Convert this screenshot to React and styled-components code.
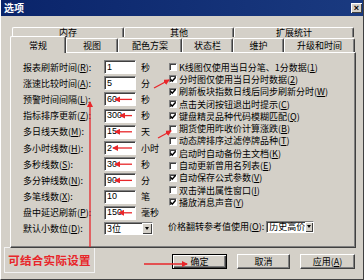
import React from 'react';
import styled, { createGlobalStyle } from 'styled-components';

const face = '#d4d0c8';
const shadow = '#808080';
const darkShadow = '#404040';
const annotRed = '#e8262a';
const uiFont = '"Noto Sans CJK SC", "Liberation Sans", sans-serif';

const GlobalStyle = createGlobalStyle`
  html, body {
    margin: 0;
    padding: 0;
    background: ${face};
  }
  body {
    font-family: ${uiFont};
  }
`;

const Window = styled.div`
  position: relative;
  width: 364px;
  height: 280px;
  box-sizing: border-box;
  background: ${face};
  border-left: 1px solid #ffffff;
  border-right: 1px solid ${darkShadow};
  border-bottom: 1px solid ${darkShadow};
  display: flex;
  flex-direction: column;
  overflow: hidden;
  font-size: 9px;
  color: #000;
`;

const TitleBar = styled.div`
  height: 16px;
  margin-left: -1px;
  margin-right: -1px;
  background: linear-gradient(to right, #0a246a, #1a3a80);
  display: flex;
  align-items: center;
  justify-content: space-between;
  padding: 0 2px 0 4px;
`;

const Title = styled.span`
  color: #fff;
  font-weight: bold;
  font-size: 10px;
  line-height: 16px;
`;

const CloseBtn = styled.div`
  width: 11px;
  height: 10px;
  background: ${face};
  box-shadow: inset 1px 1px #fff, inset -1px -1px ${darkShadow};
  display: flex;
  align-items: center;
  justify-content: center;
  font-family: 'Liberation Sans', sans-serif;
  font-weight: bold;
  font-size: 9px;
  line-height: 10px;
`;

const TabRow = styled.div`
  display: flex;
  align-items: flex-end;
  height: ${(p) => p.$h}px;
  margin-left: ${(p) => p.$left}px;
  margin-top: ${(p) => p.$top || 0}px;
  position: relative;
  z-index: ${(p) => (p.$front ? 2 : 1)};
`;

const Tab = styled.div`
  box-sizing: border-box;
  width: ${(p) => p.$w}px;
  height: ${(p) => (p.$active ? p.$h + 3 : p.$h)}px;
  margin-bottom: ${(p) => (p.$active ? -1 : 0)}px;
  background: ${face};
  border-top: 1px solid #fff;
  border-left: 1px solid #fff;
  border-right: 1px solid ${darkShadow};
  box-shadow: inset -1px 0 ${shadow};
  border-radius: 2px 2px 0 0;
  display: flex;
  align-items: center;
  justify-content: center;
  line-height: 1;
  font-size: 9px;
  position: relative;
  z-index: ${(p) => (p.$active ? 3 : 1)};
`;

const Panel = styled.div`
  box-sizing: border-box;
  margin-left: 9px;
  width: 346px;
  height: 196px;
  border-top: 1px solid #fff;
  border-left: 1px solid #fff;
  border-right: 1px solid ${darkShadow};
  border-bottom: 1px solid ${darkShadow};
  box-shadow: inset -1px -1px ${shadow};
  display: grid;
  grid-template-columns: 146px 1fr;
  padding: 6px 0 0 12px;
  position: relative;
  z-index: 1;
`;

const FieldList = styled.div`
  display: flex;
  flex-direction: column;
`;

const FieldRow = styled.div`
  display: grid;
  grid-template-columns: 81px 32px 1fr;
  align-items: center;
  height: 16.2px;
`;

const Label = styled.span`
  white-space: nowrap;
  line-height: 1;
  u {
    text-decoration: underline;
  }
`;

const Input = styled.div`
  box-sizing: border-box;
  height: 14px;
  background: #fff;
  border-top: 1px solid ${shadow};
  border-left: 1px solid ${shadow};
  border-right: 1px solid #fff;
  border-bottom: 1px solid #fff;
  box-shadow: inset 1px 1px ${darkShadow};
  padding-left: 2px;
  display: flex;
  align-items: center;
  font-family: 'Liberation Sans', sans-serif;
  font-size: 9px;
  line-height: 1;
`;

const Unit = styled.span`
  padding-left: 5px;
  font-size: 9px;
  line-height: 1;
  white-space: nowrap;
`;

const Combo = styled(Input)`
  width: ${(p) => p.$w}px;
  height: ${(p) => p.$h || 13}px;
  padding-right: 0;
  justify-content: space-between;
  font-family: ${uiFont};
`;

const DropBtn = styled.span`
  box-sizing: border-box;
  width: 10px;
  height: 100%;
  background: ${face};
  box-shadow: inset 1px 1px #fff, inset -1px -1px ${darkShadow};
  display: flex;
  align-items: center;
  justify-content: center;
  &::after {
    content: '';
    border-left: 2.5px solid transparent;
    border-right: 2.5px solid transparent;
    border-top: 3px solid #000;
  }
`;

const CheckList = styled.div`
  display: flex;
  flex-direction: column;
  padding-top: 2px;
`;

const CheckRow = styled.div`
  display: flex;
  align-items: center;
  height: 12.3px;
  white-space: nowrap;
  line-height: 1;
`;

const Box = styled.span`
  box-sizing: border-box;
  width: 8px;
  height: 8px;
  flex: none;
  margin-right: 2px;
  background: #fff;
  border-top: 1px solid ${shadow};
  border-left: 1px solid ${shadow};
  border-right: 1px solid #fff;
  border-bottom: 1px solid #fff;
  box-shadow: inset 1px 1px ${darkShadow};
  display: flex;
  align-items: center;
  justify-content: center;
`;

const PriceRow = styled.div`
  display: flex;
  align-items: center;
  margin-top: 12px;
  margin-left: -1px;
  gap: 2px;
  white-space: nowrap;
  line-height: 1;
`;

const Footer = styled.div`
  display: flex;
  align-items: flex-start;
  height: 31px;
  padding-left: 3px;
  padding-right: 8px;
`;

const Note = styled.div`
  box-sizing: border-box;
  width: 91px;
  height: 26px;
  margin-top: -1px;
  border: 1px solid #f2f2f2;
  display: flex;
  align-items: center;
  justify-content: center;
  color: ${annotRed};
  font-weight: bold;
  font-size: 11.5px;
  letter-spacing: 0.3px;
`;

const Buttons = styled.div`
  margin-left: auto;
  display: flex;
  gap: 10px;
  padding-top: 6px;
`;

const Button = styled.div`
  box-sizing: border-box;
  width: ${(p) => p.$w}px;
  height: 15px;
  background: ${face};
  border-top: 1px solid ${(p) => (p.$default ? '#000' : '#fff')};
  border-left: 1px solid ${(p) => (p.$default ? '#000' : '#fff')};
  border-right: 1px solid ${(p) => (p.$default ? '#000' : darkShadow)};
  border-bottom: 1px solid ${(p) => (p.$default ? '#000' : darkShadow)};
  box-shadow: ${(p) =>
    p.$default
      ? `inset 1px 1px #fff, inset -1px -1px ${darkShadow}, inset -2px -2px ${shadow}`
      : `inset -1px -1px ${shadow}`};
  display: flex;
  align-items: center;
  justify-content: center;
  font-size: 9px;
  line-height: 1;
  u {
    text-decoration: underline;
  }
`;

const Overlay = styled.svg`
  position: absolute;
  left: 0;
  top: 0;
  width: 364px;
  height: 280px;
  pointer-events: none;
  z-index: 10;
`;

const backTabs = [
  { label: '内存', w: 112 },
  { label: '其他', w: 110 },
  { label: '扩展统计', w: 120 },
];

const frontTabs = [
  { label: '常规', w: 56, active: true },
  { label: '视图', w: 52 },
  { label: '配色方案', w: 64 },
  { label: '状态栏', w: 51 },
  { label: '维护', w: 51 },
  { label: '升级和时间', w: 71 },
];

const fields = [
  { label: '报表刷新时间', key: 'R', value: '1', unit: '秒' },
  { label: '涨速比较时间', key: 'A', value: '5', unit: '分' },
  { label: '预警时间间隔', key: 'L', value: '60', unit: '秒' },
  { label: '指标排序更新', key: 'Z', value: '300', unit: '秒' },
  { label: '多日线天数', key: 'M', value: '15', unit: '天' },
  { label: '多小时线数', key: 'H', value: '2', unit: '小时' },
  { label: '多秒线数', key: 'S', value: '30', unit: '秒' },
  { label: '多分钟线数', key: 'N', value: '90', unit: '分' },
  { label: '多笔线数', key: 'X', value: '10', unit: '笔' },
  { label: '盘中延迟刷新', key: 'P', value: '150', unit: '毫秒' },
];

const checks = [
  { label: 'K线图仅使用当日分笔、1分数据', key: '1', on: false },
  { label: '分时图仅使用当日分时数据', key: '2', on: true },
  { label: '刷新板块指数日线后同步刷新分时', key: 'W', on: true },
  { label: '点击关闭按钮退出时提示', key: 'C', on: true },
  { label: '键盘精灵品种代码模糊匹配', key: 'Q', on: true },
  { label: '期货使用昨收价计算涨跌', key: 'B', on: false },
  { label: '动态牌排序过滤停牌品种', key: 'T', on: false },
  { label: '启动时自动备份主文档', key: 'K', on: true },
  { label: '自动更新曾用名列表', key: 'E', on: false },
  { label: '自动保存公式参数', key: 'V', on: true },
  { label: '双击弹出属性窗口', key: 'I', on: false },
  { label: '播放消息声音', key: 'Y', on: true },
];

const Check = () => (
  <svg width="7" height="7" viewBox="0 0 7 7">
    <path d="M0.6 3.2 L2.6 5.4 L6.6 0.8" fill="none" stroke="#000" strokeWidth="1.7" />
  </svg>
);

// left-column rows that carry a red pointer, with where the arrow tip sits
const pointers = [
  { row: 2, tip: 114 },
  { row: 3, tip: 119 },
  { row: 4, tip: 114 },
  { row: 5, tip: 112 },
  { row: 6, tip: 114 },
  { row: 7, tip: 114 },
  { row: 9, tip: 118 },
];

const Annotations = () => (
  <Overlay viewBox="0 0 364 280">
    <defs>
      <marker id="head" markerWidth="6" markerHeight="6" refX="5" refY="3" orient="auto" markerUnits="userSpaceOnUse">
        <path d="M0,0 L6,3 L0,6 z" fill={annotRed} />
      </marker>
    </defs>
    <g stroke={annotRed} strokeWidth="1.3" fill="none">
      {pointers.map((p) => {
        const y = 67 + p.row * 16.2;
        return <line key={p.row} x1="131" y1={y} x2={p.tip} y2={y} markerEnd="url(#head)" />;
      })}
      <line x1="153" y1="88" x2="168" y2="80" markerEnd="url(#head)" />
      <line x1="157" y1="138" x2="170" y2="131" markerEnd="url(#head)" />
      <line x1="89" y1="247" x2="89" y2="102" markerEnd="url(#head)" />
      <line x1="143" y1="264" x2="186" y2="264" markerEnd="url(#head)" />
    </g>
  </Overlay>
);

const App = () => (
  <>
    <GlobalStyle />
    <Window>
      <TitleBar>
        <Title>选项</Title>
        <CloseBtn>×</CloseBtn>
      </TitleBar>

      <TabRow $h={10} $left={11} $top={11}>
        {backTabs.map((t) => (
          <Tab key={t.label} $w={t.w} $h={10}>
            {t.label}
          </Tab>
        ))}
      </TabRow>
      <TabRow $h={15} $left={9} $front>
        {frontTabs.map((t) => (
          <Tab key={t.label} $w={t.w} $h={14} $active={t.active}>
            {t.label}
          </Tab>
        ))}
      </TabRow>

      <Panel>
        <FieldList>
          {fields.map((f) => (
            <FieldRow key={f.key}>
              <Label>
                {f.label}(<u>{f.key}</u>):
              </Label>
              <Input>{f.value}</Input>
              <Unit>{f.unit}</Unit>
            </FieldRow>
          ))}
          <FieldRow>
            <Label>
              默认小数位(<u>D</u>):
            </Label>
            <Combo $w={49}>
              3位
              <DropBtn />
            </Combo>
          </FieldRow>
        </FieldList>

        <div>
          <CheckList>
            {checks.map((c) => (
              <CheckRow key={c.key}>
                <Box>{c.on && <Check />}</Box>
                {c.label}(<u>{c.key}</u>)
              </CheckRow>
            ))}
          </CheckList>
          <PriceRow>
            <span>
              价格翻转参考值使用(<u>O</u>):
            </span>
            <Combo $w={48} $h={12}>
              历史高价
              <DropBtn />
            </Combo>
          </PriceRow>
        </div>
      </Panel>

      <Footer>
        <Note>可结合实际设置</Note>
        <Buttons>
          <Button $w={55} $default>
            确定
          </Button>
          <Button $w={53}>取消</Button>
          <Button $w={55}>
            应用(<u>A</u>)
          </Button>
        </Buttons>
      </Footer>

      <Annotations />
    </Window>
  </>
);

export default App;
